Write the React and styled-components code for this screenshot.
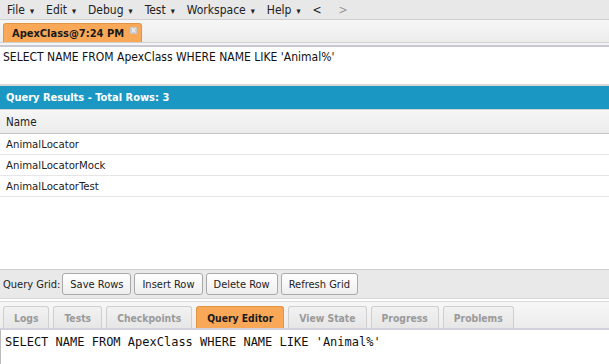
import React from "react";
import styled, { createGlobalStyle } from "styled-components";

const GlobalStyle = createGlobalStyle`
  html, body {
    margin: 0;
    padding: 0;
    background: #ffffff;
  }
  body {
    font-family: "DejaVu Sans Condensed", "DejaVu Sans", Verdana, sans-serif;
    font-size: 11.5px;
    color: #222;
  }
`;

const menus = ["File", "Edit", "Debug", "Test", "Workspace", "Help"];
const rows = ["AnimalLocator", "AnimalLocatorMock", "AnimalLocatorTest"];
const gridButtons = ["Save Rows", "Insert Row", "Delete Row", "Refresh Grid"];
const panels = ["Logs", "Tests", "Checkpoints", "Query Editor", "View State", "Progress", "Problems"];

const QUERY = "SELECT NAME FROM ApexClass WHERE NAME LIKE 'Animal%'";

function App() {
  return (
    <>
      <GlobalStyle />
      <Page>
        <MenuBar>
          {menus.map((m) => (
            <MenuItem key={m}>
              {m}
              <Caret>▾</Caret>
            </MenuItem>
          ))}
          <Nav>&lt;</Nav>
          <Nav $disabled>&gt;</Nav>
        </MenuBar>

        <TabStrip>
          <FileTab>
            ApexClass@7:24 PM
            <CloseBox>×</CloseBox>
          </FileTab>
        </TabStrip>
        <Divider />

        <QueryInput>{QUERY}</QueryInput>

        <ResultsHeader>Query Results - Total Rows: 3</ResultsHeader>
        <Grid>
          <HeadCell>Name</HeadCell>
          {rows.map((r) => (
            <Cell key={r}>{r}</Cell>
          ))}
        </Grid>

        <GridToolbar>
          <ToolbarLabel>Query Grid:</ToolbarLabel>
          {gridButtons.map((b) => (
            <GridButton key={b}>{b}</GridButton>
          ))}
        </GridToolbar>

        <PanelTabs>
          {panels.map((p) => (
            <PanelTab key={p} $active={p === "Query Editor"}>
              {p}
            </PanelTab>
          ))}
        </PanelTabs>

        <Editor>{QUERY}</Editor>
      </Page>
    </>
  );
}

export default App;

const Page = styled.div`
  width: 609px;
  height: 364px;
  display: flex;
  flex-direction: column;
  overflow: hidden;
  background: #fff;
`;

const MenuBar = styled.div`
  height: 19px;
  display: flex;
  align-items: center;
  padding-left: 7px;
  background: #e8e8e8;
  border-bottom: 1px solid #cfcfcf;
  font-size: 12px;
  color: #222;
`;

const MenuItem = styled.span`
  display: inline-flex;
  align-items: center;
  margin-right: 12px;
`;

const Caret = styled.span`
  font-size: 9px;
  margin-left: 5px;
  margin-top: 2px;
`;

const Nav = styled.span`
  margin-left: ${(p) => (p.$disabled ? "17px" : "0px")};
  color: ${(p) => (p.$disabled ? "#9a9a9a" : "#222")};
  font-size: 12px;
`;

const TabStrip = styled.div`
  height: 22px;
  display: flex;
  align-items: flex-end;
  padding-left: 3px;
  background: linear-gradient(#f6f6f6, #ececec);
  border-bottom: 1px solid #d0d0d0;
`;

const FileTab = styled.div`
  height: 19px;
  box-sizing: border-box;
  display: flex;
  align-items: center;
  padding: 0 4px 0 8px;
  background: #f9a857;
  border: 1px solid #e09545;
  border-bottom: none;
  border-radius: 3px 3px 0 0;
  font-weight: bold;
  font-size: 11px;
  color: #1a1a1a;
  white-space: nowrap;
`;

const CloseBox = styled.span`
  margin-left: 6px;
  width: 7px;
  height: 7px;
  margin-top: -6px;
  display: inline-flex;
  align-items: center;
  justify-content: center;
  background: #c8c8c8;
  color: #f4f4f4;
  font-size: 8px;
  line-height: 7px;
  border-radius: 1px;
`;

const Divider = styled.div`
  height: 2px;
  background: #f4f4f4;
  border-bottom: 2px solid #c9c9d4;
`;

const QueryInput = styled.div`
  height: 39px;
  padding: 3px 0 0 3px;
  box-sizing: border-box;
  font-size: 12px;
  color: #111;
  border-bottom: 2px solid #d8d8d8;
`;

const ResultsHeader = styled.div`
  height: 23px;
  display: flex;
  align-items: center;
  padding-left: 6px;
  background: #1a98c3;
  color: #fff;
  font-weight: bold;
  font-size: 11px;
  border-bottom: 1px solid #d4d4d4;
`;

const Grid = styled.div`
  flex: 1;
  display: flex;
  flex-direction: column;
`;

const HeadCell = styled.div`
  height: 23px;
  display: flex;
  align-items: center;
  padding-left: 6px;
  background: linear-gradient(#f6f6f6, #ebebeb);
  border-bottom: 1px solid #c6c6c6;
  font-size: 11.5px;
`;

const Cell = styled.div`
  height: 20px;
  display: flex;
  align-items: center;
  padding-left: 6px;
  border-bottom: 1px solid #e6e6e6;
  font-size: 11.3px;
`;

const GridToolbar = styled.div`
  height: 28px;
  margin-top: 2px;
  display: flex;
  align-items: center;
  gap: 3px;
  padding-left: 3px;
  background: #e9e9e9;
  border-top: 1px solid #d0d0d0;
  border-bottom: 1px solid #d8d8d8;
`;

const ToolbarLabel = styled.span`
  font-size: 11px;
  margin-right: -1px;
`;

const GridButton = styled.button`
  height: 22px;
  padding: 0 7px;
  font-family: inherit;
  font-size: 11px;
  color: #222;
  background: linear-gradient(#ffffff, #eeeeee);
  border: 1px solid #a9a9a9;
  border-radius: 3px;
`;

const PanelTabs = styled.div`
  height: 26px;
  margin-top: 2px;
  display: flex;
  align-items: flex-end;
  gap: 4px;
  padding-left: 3px;
  background: linear-gradient(#f7f7f7, #ececec);
  border-top: 1px solid #d9d9d9;
  border-bottom: 2px solid #d0d0dc;
`;

const PanelTab = styled.div`
  height: 22px;
  display: flex;
  align-items: center;
  padding: 0 10px;
  box-sizing: border-box;
  font-weight: bold;
  font-size: 10.3px;
  color: ${(p) => (p.$active ? "#1a1a1a" : "#9a9a9a")};
  background: ${(p) => (p.$active ? "#f9a857" : "linear-gradient(#f2f2f2, #e6e6e6)")};
  border: 1px solid ${(p) => (p.$active ? "#e09545" : "#cfcfcf")};
  border-bottom: none;
  border-radius: 3px 3px 0 0;
`;

const Editor = styled.div`
  flex: 0 0 34px;
  padding: 5px 0 0 4px;
  box-sizing: border-box;
  font-family: "DejaVu Sans Mono", "Liberation Mono", monospace;
  font-size: 12px;
  color: #111;
  border-left: 1px solid #bbb;
`;
